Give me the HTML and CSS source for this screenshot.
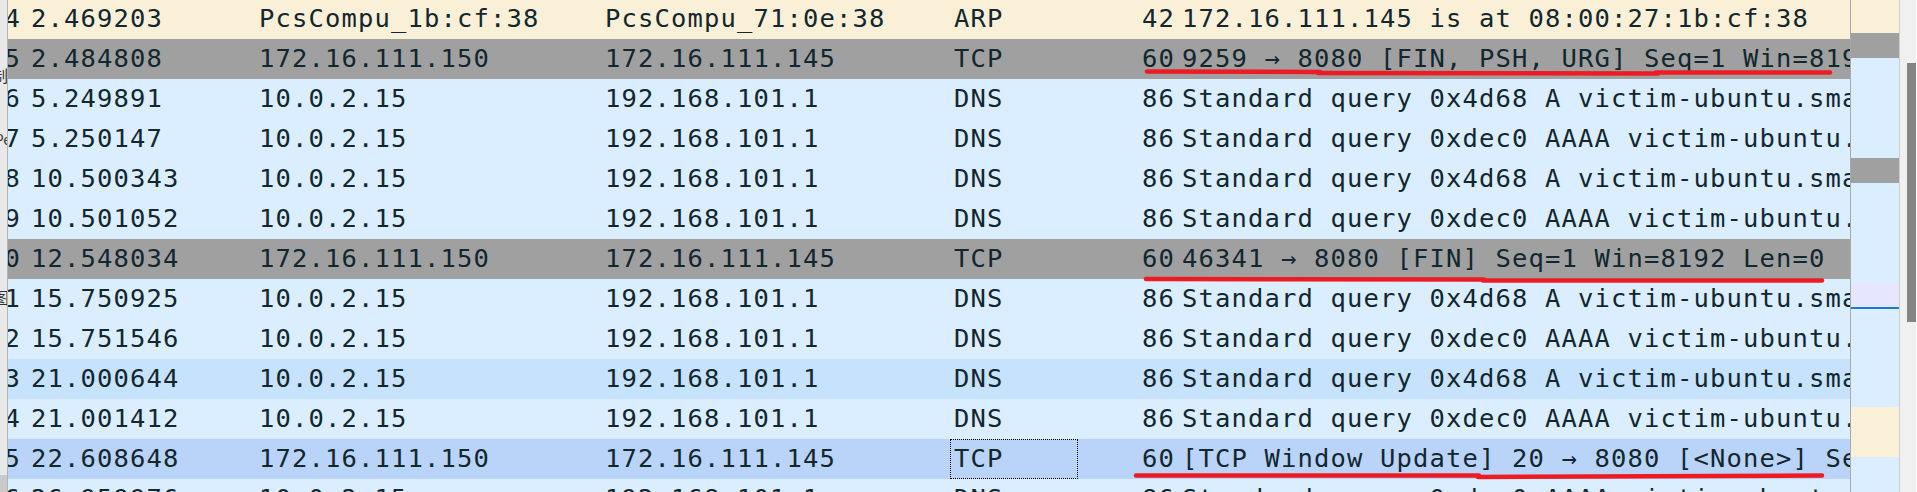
FILE: index.html
```html
<!DOCTYPE html>
<html>
<head>
<meta charset="utf-8">
<link rel="stylesheet" href="styles.css">
</head>
<body>
<div class="app">
  <div class="strip">
    <div class="frag frag-a"><span>控制</span></div>
    <div class="frag frag-b"><span>Pe</span></div>
    <div class="frag frag-c"><span>图</span></div>
    <div class="strip-foot"></div>
  </div>
  <div class="list">
    <div class="rows">
      <div class="row arp"><span class="no">14</span><span>2.469203</span><span>PcsCompu_1b:cf:38</span><span>PcsCompu_71:0e:38</span><span>ARP</span><span class="len">42</span><span class="info">172.16.111.145 is at 08:00:27:1b:cf:38</span></div>
      <div class="row fin"><span class="no">15</span><span>2.484808</span><span>172.16.111.150</span><span>172.16.111.145</span><span>TCP</span><span class="len">60</span><span class="info">9259 → 8080 [FIN, PSH, URG] Seq=1 Win=8192 Urg=0 Len=0</span></div>
      <div class="row udp"><span class="no">16</span><span>5.249891</span><span>10.0.2.15</span><span>192.168.101.1</span><span>DNS</span><span class="len">86</span><span class="info">Standard query 0x4d68 A victim-ubuntu.smallbusiness.local</span></div>
      <div class="row udp"><span class="no">17</span><span>5.250147</span><span>10.0.2.15</span><span>192.168.101.1</span><span>DNS</span><span class="len">86</span><span class="info">Standard query 0xdec0 AAAA victim-ubuntu.smallbusiness.local</span></div>
      <div class="row udp"><span class="no">18</span><span>10.500343</span><span>10.0.2.15</span><span>192.168.101.1</span><span>DNS</span><span class="len">86</span><span class="info">Standard query 0x4d68 A victim-ubuntu.smallbusiness.local</span></div>
      <div class="row udp"><span class="no">19</span><span>10.501052</span><span>10.0.2.15</span><span>192.168.101.1</span><span>DNS</span><span class="len">86</span><span class="info">Standard query 0xdec0 AAAA victim-ubuntu.smallbusiness.local</span></div>
      <div class="row fin"><span class="no">20</span><span>12.548034</span><span>172.16.111.150</span><span>172.16.111.145</span><span>TCP</span><span class="len">60</span><span class="info">46341 → 8080 [FIN] Seq=1 Win=8192 Len=0</span></div>
      <div class="row udp"><span class="no">21</span><span>15.750925</span><span>10.0.2.15</span><span>192.168.101.1</span><span>DNS</span><span class="len">86</span><span class="info">Standard query 0x4d68 A victim-ubuntu.smallbusiness.local</span></div>
      <div class="row udp"><span class="no">22</span><span>15.751546</span><span>10.0.2.15</span><span>192.168.101.1</span><span>DNS</span><span class="len">86</span><span class="info">Standard query 0xdec0 AAAA victim-ubuntu.smallbusiness.local</span></div>
      <div class="row hover"><span class="no">23</span><span>21.000644</span><span>10.0.2.15</span><span>192.168.101.1</span><span>DNS</span><span class="len">86</span><span class="info">Standard query 0x4d68 A victim-ubuntu.smallbusiness.local</span></div>
      <div class="row udp"><span class="no">24</span><span>21.001412</span><span>10.0.2.15</span><span>192.168.101.1</span><span>DNS</span><span class="len">86</span><span class="info">Standard query 0xdec0 AAAA victim-ubuntu.smallbusiness.local</span></div>
      <div class="row sel"><span class="no">25</span><span>22.608648</span><span>172.16.111.150</span><span>172.16.111.145</span><span class="focus">TCP</span><span class="len">60</span><span class="info">[TCP Window Update] 20 → 8080 [&lt;None&gt;] Seq=1 Win=8192 Len=0</span></div>
      <div class="row udp"><span class="no">26</span><span>26.959976</span><span>10.0.2.15</span><span>192.168.101.1</span><span>DNS</span><span class="len">86</span><span class="info">Standard query 0xdec0 AAAA victim-ubuntu.smallbusiness.local</span></div>
    </div>
  </div>
  <div class="map">
    <div class="m m-arp h33"></div>
    <div class="m m-fin h25"></div>
    <div class="m m-udp h100"></div>
    <div class="m m-fin h25"></div>
    <div class="m m-udp h100"></div>
    <div class="m m-tcp h24"></div>
    <div class="m m-mark h2"></div>
    <div class="m m-udp h98"></div>
    <div class="m m-arp h50"></div>
    <div class="m m-udp grow"></div>
  </div>
  <div class="sb"><div class="thumb"></div></div>
  <svg class="marks" width="1917" height="492" viewBox="0 0 1917 492">
    <g fill="none" stroke="#ed1c24" stroke-width="4.5" stroke-linecap="round">
      <path d="M1147 71.5 L1320 72"/>
      <path d="M1318 73 L1658 73.5"/>
      <path d="M1656 72.5 L1830 72.5"/>
      <path d="M1146 279 L1484 279.5"/>
      <path d="M1483 280.5 L1822 280.5"/>
      <path d="M1136 475.5 L1479 475.5"/>
      <path d="M1478 477 L1822 475.5"/>
    </g>
  </svg>
</div>
</body>
</html>
```

FILE: styles.css
```css
html, body {
  margin: 0;
  padding: 0;
}
body {
  width: 1917px;
  height: 492px;
  overflow: hidden;
  background: #ffffff;
  font-family: "DejaVu Sans Mono", "Liberation Mono", monospace;
}
.app {
  position: relative;
  display: flex;
  width: 1917px;
  height: 492px;
  overflow: hidden;
}
.strip {
  width: 7px;
  flex-shrink: 0;
  border-right: 1px solid #b3b3b3;
  background: #e9e9e9;
  display: flex;
  flex-direction: column;
  overflow: hidden;
}
.frag {
  display: flex;
  justify-content: flex-end;
  height: 22px;
  line-height: 22px;
  font-family: "Noto Sans CJK SC", "Noto Sans", sans-serif;
  font-size: 16px;
  color: #333333;
  white-space: nowrap;
}
.frag span {
  flex-shrink: 0;
}
.frag-a {
  margin-top: 64px;
  margin-right: -1px;
}
.frag-b {
  margin-top: 42px;
  font-size: 14px;
  margin-right: -4px;
}
.frag-c {
  margin-top: 136px;
  margin-right: -2px;
}
.strip-foot {
  margin-top: auto;
  height: 17px;
  background: #c9c9c9;
}
.list {
  width: 1842px;
  flex-shrink: 0;
  overflow: hidden;
}
.rows {
  margin-top: -1px;
}
.row {
  display: grid;
  grid-template-columns: 19px 228px 346px 349px 128px 100px 672px;
  height: 40px;
  line-height: 38px;
  font-size: 25.5px;
  letter-spacing: 1.15px;
  color: #12272e;
  white-space: nowrap;
}
.row > span {
  padding-left: 4px;
  overflow: hidden;
}
.row > .no {
  display: flex;
  justify-content: flex-end;
  padding-left: 0;
  padding-right: 6px;
  overflow: visible;
}
.row > .len {
  text-align: right;
  padding-left: 0;
  padding-right: 3px;
}
.row > .info {
  padding-left: 4px;
}
.focus {
  outline: 1px dotted #000000;
  outline-offset: -1px;
}
.arp { background: #faf0d7; }
.fin { background: #a0a0a0; }
.udp { background: #daeeff; }
.hover { background: #c6e2fd; }
.sel { background: #bad3f9; }

.map {
  width: 48px;
  flex-shrink: 0;
  border-left: 1px solid #a9a9a9;
  display: flex;
  flex-direction: column;
}
.m { flex-shrink: 0; }
.m-arp { background: #faf0d7; }
.m-fin { background: #a0a0a0; }
.m-udp { background: #daeeff; }
.m-tcp { background: #e7e6ff; }
.m-mark { background: #1a7fd4; }
.h2 { height: 2px; }
.h24 { height: 24px; }
.h25 { height: 25px; }
.h33 { height: 33px; }
.h50 { height: 50px; }
.h98 { height: 98px; }
.h100 { height: 100px; }
.grow { flex: 1; }

.sb {
  width: 17px;
  flex-shrink: 0;
  border-left: 1px solid #cdcdcd;
  background: #f0f0f0;
  display: flex;
  justify-content: flex-end;
  align-items: flex-start;
  padding-top: 63px;
  box-sizing: border-box;
}
.thumb {
  width: 9px;
  height: 259px;
  background: #858585;
}
.marks {
  position: absolute;
  left: 0;
  top: 0;
  pointer-events: none;
}
```
